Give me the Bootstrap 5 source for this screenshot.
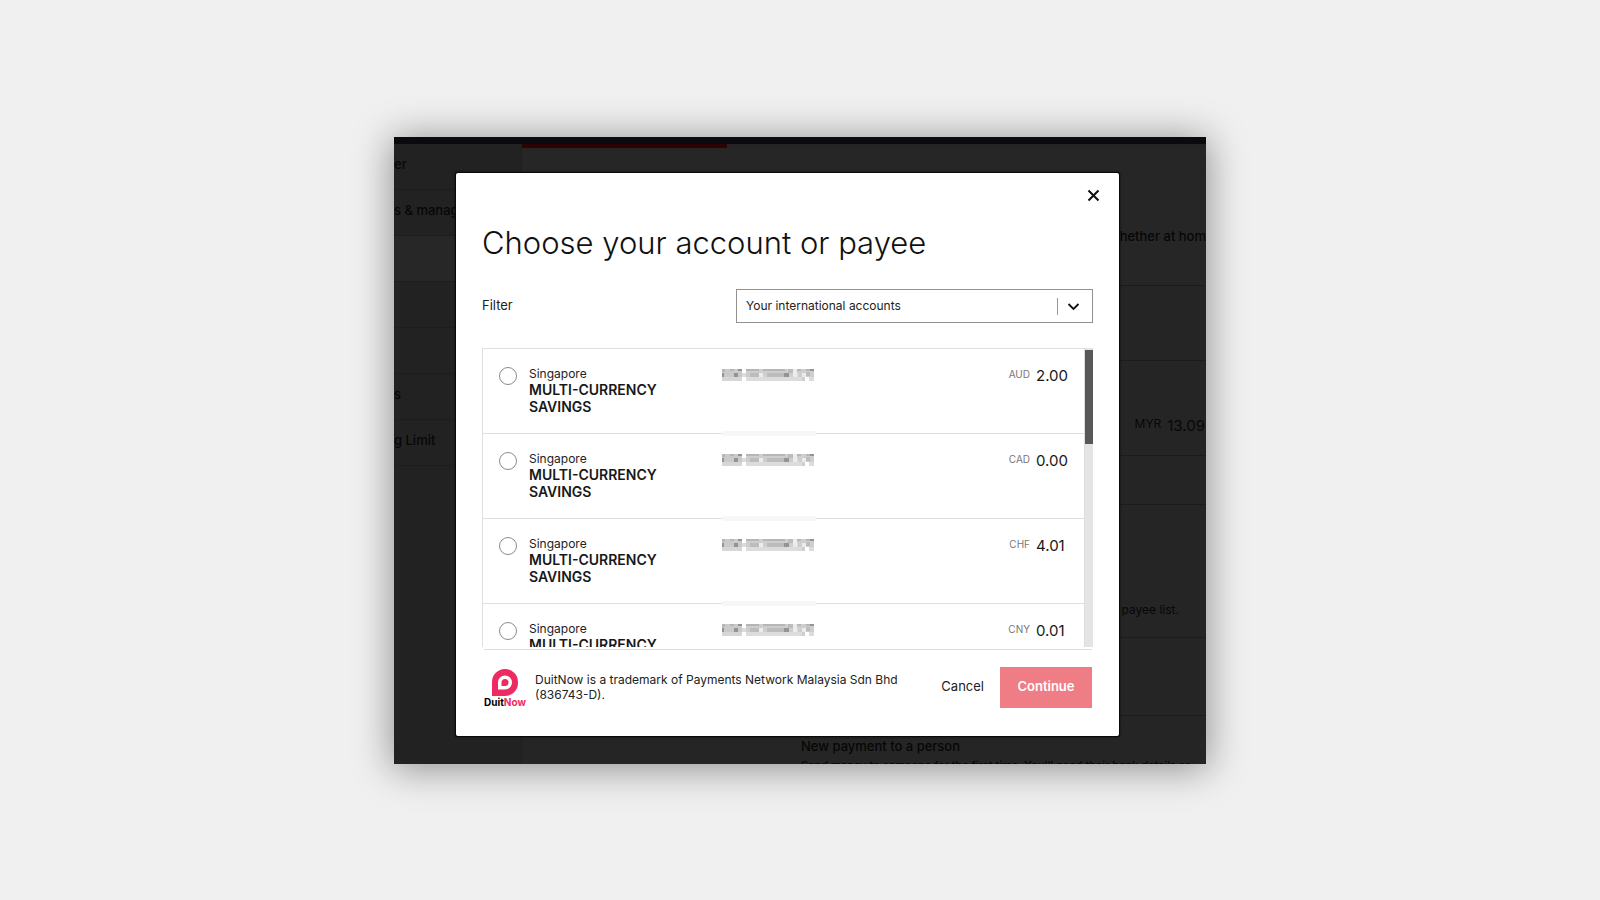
<!DOCTYPE html>
<html lang="en">
<head>
<meta charset="utf-8">
<meta name="viewport" content="width=device-width, initial-scale=1">
<title>Choose your account or payee</title>
<link href="https://cdn.jsdelivr.net/npm/bootstrap@5.3.0/dist/css/bootstrap.min.css" rel="stylesheet">
<style>
  body { background: #f0f0f0; font-family: Inter, "Liberation Sans", sans-serif; font-size: 12px; color: #222; }
  .window { width: 100%; max-width: 812px; padding: 36px 87px 28px 62px; background: #252525; box-shadow: 0 3px 36px 2px rgba(0,0,0,.4); }

  /* dimmed page behind the dialog */
  .behind { position: absolute; inset: 0; color: #070707; font-size: 13px; font-weight: 500; line-height: 18px; }
  .topbar { height: 7px; background: #090b0e; flex: none; }
  .side { width: 128px; background: #222; border-right: 1px solid #1f1f1f; flex: none; }
  .side div { height: 46px; padding-top: 11px; border-bottom: 1px solid #1d1d1d; white-space: pre; }
  .side .current { background: #272727; }
  .redline { width: 205px; height: 4px; background: #2c0204; }
  .band { border-bottom: 1px solid #1c1c1c; text-align: right; white-space: nowrap; flex: none; }
  .band-intro { height: 138px; padding-top: 79px; background: #262626; }
  .band-a { height: 75px; }
  .band-b { height: 95px; padding: 55px 1px 0 0; font-weight: 400; }
  .band-b .ccy { font-size: 12px; color: inherit; }
  .band-b .amount { color: inherit; }
  .band-c { height: 49px; }
  .band-d { height: 133px; padding: 96px 27px 0 0; font-size: 12px; font-weight: 400; }
  .band-e { height: 78px; }
  .newpay { padding-top: 21px; width: 405px; white-space: nowrap; }
  .newpay small { font-size: 11px; }

  /* dialog */
  .dialog { background: #fff; border-radius: 2px; box-shadow: 0 0 0 1px #0a0a0a, 0 0 2px 1px #0a0a0a; padding: 16px 26px 28px; }
  .close-btn { padding: 0; border: 0; background: none; line-height: 0; margin-right: -7px; }
  .dialog h1 { font-size: 31px; font-weight: 300; line-height: 40px; margin: 21px 0 26px; color: #111; }
  .filter-label { font-size: 13px; width: 254px; }
  .filter-select { height: 34px; padding: 0 44px 0 9px; border: 1px solid #929292; border-radius: 0; appearance: none; color: #222; font-size: 12px;
    background: #fff url("data:image/svg+xml,%3Csvg xmlns='http://www.w3.org/2000/svg' width='36' height='18'%3E%3Cpath d='M1.500 1v17' stroke='%23999'/%3E%3Cpath d='M12.500 7l5 5 5-5' fill='none' stroke='%23111' stroke-width='1.800'/%3E%3C/svg%3E") no-repeat right center; }
  .accounts { height: 299px; margin-top: 25px; overflow: hidden; }
  .account { height: 85px; padding: 17px 16px 0 16px; border: 1px solid #dfdfdf; border-width: 1px 0 0 1px; }
  .account input { appearance: none; width: 18px; height: 18px; border: 1px solid #8c8c8c; border-radius: 50%; margin: 1px 12px 0 0; flex: none; }
  .account label { width: 193px; line-height: 15px; }
  .account strong { display: block; font-size: 14px; font-weight: 600; line-height: 17px; width: 140px; color: #181818; }
  .masked { display: block; margin-top: 3px; }
  .masked-edge { position: absolute; left: 0; top: 65px; width: 94px; height: 5px; background: #f7f7f7; }
  .ccy { font-size: 10px; color: #777; line-height: 16px; margin-right: 6px; }
  .amount { font-size: 15px; line-height: 20px; color: #181818; }
  .account .amount { width: 32px; }
  .track { width: 9px; background: #e4e4e2; border-left: 1px solid #ddd; padding-top: 2px; flex: none; }
  .thumb { height: 94px; background: #585858; }
  .rule { height: 1px; background: #dedede; margin: 2px 1px 17px 2px; }
  .note { line-height: 15px; margin-left: 9px; }
  .brand { width: 42px; margin-left: 2px; padding-top: 2px; font-size: 10px; font-weight: 700; line-height: 12px; color: #000; text-align: center; }
  .brand svg { display: block; margin: 0 auto; }
  .brand span span { color: #ee2a62; }
  .cancel { font-size: 13px; color: #222; padding: 0; margin-left: 24px; border: 0; background: none; }
  .go { width: 92px; height: 41px; margin: 0 1px 0 16px; border: 0; border-radius: 0; background: #ee7d86; color: #fff; font-size: 13px; font-weight: 600; padding: 0; }
</style>
</head>
<body class="min-vh-100 d-flex align-items-center justify-content-center">
<svg width="0" height="0" class="position-absolute" aria-hidden="true">
  <symbol id="mask" viewBox="0 0 94 12">
    <path fill="#cacaca" d="M0 0h20v12H0z"/><path fill="#cecece" d="M24 0h68v12H24z"/>
    <path fill="#dcdcdc" d="M20 4h4v4h-4zM71 4h5v4h-5zM24 8h56v4H24zM87 8h5v4h-5z"/>
    <path fill="#ececec" d="M37 4h4v4h-4zM80 4h4v4h-4zM71 0h4v8h-4z"/>
    <path fill="#fff" d="M83 8h4v4h-4z"/>
    <path fill="#d6d6d6" d="M0 8h20v4H0z"/>
    <path fill="#b6b6b6" d="M0 0h3v3H0zM8 0h4v2H8zM24 0h13v2H24zM41 0h22v2H41zM75 0h4v2h-4zM84 0h4v2h-4z"/>
    <path fill="#bcbcbc" d="M28 4h9v4h-9zM45 4h18v4H45zM66 0h5v4h-5zM84 3h4v4h-4z"/>
    <path fill="#949494" d="M0 4h2v4H0zM12 4h4v4h-4zM16 0h4v2h-4zM62 4h5v4h-5zM88 0h4v2h-4z"/>
  </symbol>
</svg>

<main class="window position-relative overflow-visible">
  <div class="behind d-flex flex-column overflow-hidden" aria-hidden="true">
    <div class="topbar"></div>
    <div class="d-flex flex-grow-1">
      <div class="side overflow-hidden">
        <div>er</div>
        <div>s &amp; manag</div>
        <div class="current"></div>
        <div></div>
        <div></div>
        <div>s</div>
        <div>g Limit</div>
      </div>
      <div class="flex-grow-1 d-flex flex-column">
        <div class="redline"></div>
        <div class="band band-intro">hether at hom</div>
        <div class="band band-a"></div>
        <div class="band band-b"><span class="ccy align-top">MYR</span><span class="amount">13.09</span></div>
        <div class="band band-c"></div>
        <div class="band band-d">payee list.</div>
        <div class="band band-e"></div>
        <div class="newpay align-self-end">New payment to a person<br><small>Send money to someone for the first time. You'll need their bank details or</small></div>
      </div>
    </div>
  </div>

  <section class="dialog position-relative" role="dialog" aria-labelledby="title">
    <div class="d-flex justify-content-end">
      <button class="close-btn" type="button" aria-label="Close">
        <svg width="13" height="13" viewBox="0 0 13 13"><path d="M1.500 1.500l10 10M11.500 1.500l-10 10" stroke="#111" stroke-width="2.100"/></svg>
      </button>
    </div>
    <h1 id="title">Choose your account or payee</h1>
    <div class="d-flex align-items-center">
      <label class="filter-label" for="filter">Filter</label>
      <select class="filter-select flex-grow-1" id="filter"><option>Your international accounts</option></select>
    </div>

    <div class="accounts d-flex">
      <div class="flex-grow-1">
        <div class="account d-flex align-items-start">
          <input type="radio" name="acc" id="a1">
          <label for="a1">Singapore<strong>MULTI-CURRENCY SAVINGS</strong></label>
          <div class="position-relative"><svg class="masked" width="94" height="12"><use href="#mask"/></svg><div class="masked-edge"></div></div>
          <div class="ms-auto d-flex"><span class="ccy">AUD</span><span class="amount">2.00</span></div>
        </div>
        <div class="account d-flex align-items-start">
          <input type="radio" name="acc" id="a2">
          <label for="a2">Singapore<strong>MULTI-CURRENCY SAVINGS</strong></label>
          <div class="position-relative"><svg class="masked" width="94" height="12"><use href="#mask"/></svg><div class="masked-edge"></div></div>
          <div class="ms-auto d-flex"><span class="ccy">CAD</span><span class="amount">0.00</span></div>
        </div>
        <div class="account d-flex align-items-start">
          <input type="radio" name="acc" id="a3">
          <label for="a3">Singapore<strong>MULTI-CURRENCY SAVINGS</strong></label>
          <div class="position-relative"><svg class="masked" width="94" height="12"><use href="#mask"/></svg><div class="masked-edge"></div></div>
          <div class="ms-auto d-flex"><span class="ccy">CHF</span><span class="amount">4.01</span></div>
        </div>
        <div class="account d-flex align-items-start">
          <input type="radio" name="acc" id="a4">
          <label for="a4">Singapore<strong>MULTI-CURRENCY SAVINGS</strong></label>
          <div class="position-relative"><svg class="masked" width="94" height="12"><use href="#mask"/></svg></div>
          <div class="ms-auto d-flex"><span class="ccy">CNY</span><span class="amount">0.01</span></div>
        </div>
      </div>
      <div class="track"><div class="thumb"></div></div>
    </div>
    <div class="rule"></div>

    <div class="d-flex align-items-center">
      <div class="brand flex-shrink-0">
        <svg width="26" height="27" viewBox="0 0 26 27"><path fill="#ee2a62" fill-rule="evenodd" d="M0 27V13a13 13 0 0 1 26 0v1a13 13 0 0 1-13 13zM6 20.500V13.500a7 7 0 1 1 7 7z"/><path fill="#ee2a62" d="M9.500 17v-3.500a3.500 3.500 0 1 1 3.500 3.500z"/></svg>
        <span>Duit<span>Now</span></span>
      </div>
      <div class="note flex-grow-1">DuitNow is a trademark of Payments Network Malaysia Sdn Bhd (836743-D).</div>
      <button class="cancel" type="button">Cancel</button>
      <button class="go flex-shrink-0" type="button">Continue</button>
    </div>
  </section>
</main>
<script src="https://cdn.jsdelivr.net/npm/bootstrap@5.3.0/dist/js/bootstrap.bundle.min.js"></script>
</body>
</html>
